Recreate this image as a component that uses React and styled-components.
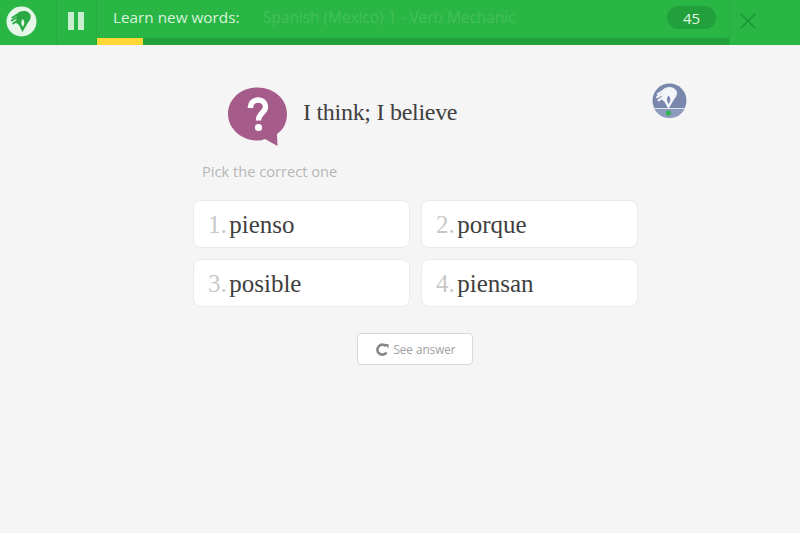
import React from 'react';
import styled, { createGlobalStyle } from 'styled-components';

const Global = createGlobalStyle`
  html, body { margin: 0; padding: 0; background: #f5f5f5; }
  * { box-sizing: border-box; }
`;

const Page = styled.div`
  width: 800px;
  height: 533px;
  overflow: hidden;
  background: #f5f5f5;
`;

const TopBar = styled.header`
  height: 45px;
  background: #29b645;
  display: flex;
  font-family: "Open Sans", sans-serif;
`;

const LogoCell = styled.div`
  width: 57px;
  border-right: 1px solid #26ab40;
  display: flex;
  align-items: center;
  padding: 0 0 3px 6px;
`;

const PauseCell = styled.div`
  width: 40px;
  border-right: 1px solid #26ab40;
  display: flex;
  align-items: center;
  justify-content: center;
  gap: 4px;
  padding: 0 1px 3px 0;
`;

const PauseBar = styled.span`
  width: 6px;
  height: 18px;
  background: #c9eecf;
`;

const Main = styled.div`
  width: 633px;
  display: flex;
  flex-direction: column;
  border-right: 1px solid #26ab40;
`;

const Info = styled.div`
  height: 38px;
  display: flex;
  align-items: center;
  padding: 0 13px 3px 16px;
`;

const Label = styled.span`
  font-size: 15.3px;
  color: #d8f3dc;
  width: 150px;
  margin-bottom: 1px;
`;

const Course = styled.span`
  font-size: 15.4px;
  color: #43c05c;
  flex: 1;
  margin-bottom: 1px;
`;

const Count = styled.span`
  width: 49px;
  height: 23px;
  border-radius: 12px;
  background: #22a03c;
  color: #e3f7e6;
  font-size: 15px;
  display: flex;
  align-items: center;
  justify-content: center;
`;

const Track = styled.div`
  height: 7px;
  background: #22a03c;
`;

const Fill = styled.div`
  height: 100%;
  background: #fdd835;
`;

const CloseCell = styled.div`
  flex: 1;
  display: flex;
  align-items: center;
  padding: 0 0 3px 9px;
`;

const Content = styled.main`
  width: 800px;
  display: flex;
  flex-direction: column;
`;

const Column = styled.div`
  width: 445px;
  margin-left: 193px;
  position: relative;
`;

const Prompt = styled.div`
  display: flex;
  align-items: center;
  gap: 15px;
  padding: 42px 0 0 35px;
`;

const PromptText = styled.h1`
  margin: 0 0 10px;
  font: 400 24px "Liberation Serif", serif;
  letter-spacing: -0.28px;
  color: #404040;
`;

const Hint = styled.div`
  margin: 14px 0 0 9px;
  font: 14.65px "Open Sans", sans-serif;
  color: #b5b5b5;
`;

const Grid = styled.div`
  margin-top: 19px;
  display: grid;
  grid-template-columns: 217px 217px;
  grid-auto-rows: 48px;
  gap: 11px;
`;

const Choice = styled.button`
  padding: 1px 0 0 14px;
  background: #fff;
  border: 1px solid #ebebeb;
  border-radius: 8px;
  display: flex;
  align-items: center;
  font: 25px "Liberation Serif", serif;
  color: #404040;
`;

const Num = styled.span`
  color: #c8c8c8;
  margin-right: 2.5px;
`;

const Footer = styled.div`
  display: flex;
  justify-content: center;
  margin: 26px 0 0 0;
  padding-right: 1px;
`;

const AnswerButton = styled.button`
  width: 116px;
  height: 32px;
  padding: 0 0 0 2px;
  background: #fff;
  border: 1px solid #d8d8d8;
  border-radius: 4px;
  display: flex;
  align-items: center;
  justify-content: center;
  gap: 4px;
  font: 11.7px "Open Sans", sans-serif;
  color: #a0a0a0;
`;

const Mascot = styled.div`
  position: absolute;
  left: 459px;
  top: 38px;
  width: 35px;
  height: 35px;
`;

// hand shape shared by the logo and the mascot, drawn in a 31x31 box
function Hand({ fill, hole }) {
  return (
    <g>
      <path d="M11 8 C13 5.5 16 4.5 19 5 C22.5 5.5 25 8 24.8 11 C24.6 14 22 16 20.5 19 L16.5 26 L13.5 20 C12.8 18.5 11.5 17.5 10 17 Z" fill={fill} />
      <path d="M6.5 11.5 L13 7.5 M5.8 14.5 L12.5 10.5 M7.2 17.5 L13 13.5" stroke={fill} strokeWidth="2" strokeLinecap="round" fill="none" />
      <path d="M16.8 13 C19 15 18.8 18 16.8 21 C14.8 18 14.6 15 16.8 13 Z" fill={hole} />
    </g>
  );
}

function Logo() {
  return (
    <svg width="31" height="31" viewBox="0 0 31 31">
      <circle cx="15.5" cy="15.5" r="15" fill="#e6f7e9" />
      <Hand fill="#29a843" hole="#e6f7e9" />
    </svg>
  );
}

function Bubble() {
  return (
    <svg width="60" height="60" viewBox="0 0 60 60">
      <path d="M29.5 0.5 C46 0.5 59 12 59 27 C59 36 55 43 49 47 L49.5 59 L37 52 C34.5 53 32 53.5 29.5 53.5 C13 53.5 0 41.5 0 27 C0 12 13 0.5 29.5 0.5 Z" fill="#a65c8b" />
      <path d="M22.5 21 C22.5 15.5 26 13 30 13 C35 13 37.5 16.5 37.5 20 C37.5 25.5 30.5 26 30.5 33.5" fill="none" stroke="#fff" strokeWidth="5.5" />
      <circle cx="30.5" cy="40.5" r="3.6" fill="#fff" />
    </svg>
  );
}

function MascotIcon() {
  return (
    <svg width="35" height="35" viewBox="0 0 35 35">
      <circle cx="17.5" cy="17.5" r="17" fill="#7a87ad" />
      <path d="M2.5 26 H32.5 A17 17 0 0 1 2.5 26 Z" fill="#8e9abd" />
      <path d="M2.5 25.5 H32.5" stroke="#dfe4ee" strokeWidth="1" />
      <g transform="translate(-1 -1) scale(1.05)">
        <Hand fill="#f2f4f8" hole="#7a87ad" />
      </g>
      <circle cx="16.5" cy="30" r="2.6" fill="#32b34c" />
    </svg>
  );
}

function Refresh() {
  return (
    <svg width="13" height="13" viewBox="0 0 13 13">
      <path d="M10.5 9.5 A5 5 0 1 1 10 3.2" fill="none" stroke="#888" strokeWidth="2.6" />
      <path d="M8 1 L12.5 1 L12.5 5.5 Z" fill="#888" />
    </svg>
  );
}

const choices = ['pienso', 'porque', 'posible', 'piensan'];

export default function App() {
  return (
    <Page>
      <Global />
      <TopBar>
        <LogoCell><Logo /></LogoCell>
        <PauseCell><PauseBar /><PauseBar /></PauseCell>
        <Main>
          <Info>
            <Label>Learn new words:</Label>
            <Course>Spanish (Mexico) 1 - Verb Mechanic</Course>
            <Count>45</Count>
          </Info>
          <Track><Fill style={{ width: `${(46 / 632) * 100}%` }} /></Track>
        </Main>
        <CloseCell>
          <svg width="18" height="18" viewBox="0 0 18 18">
            <path d="M2 2 L16 16 M16 2 L2 16" stroke="#1e9637" strokeWidth="1.6" />
          </svg>
        </CloseCell>
      </TopBar>
      <Content>
        <Column>
          <Prompt>
            <Bubble />
            <PromptText>I think; I believe</PromptText>
          </Prompt>
          <Mascot><MascotIcon /></Mascot>
          <Hint>Pick the correct one</Hint>
          <Grid>
            {choices.map((c, i) => (
              <Choice key={c}><Num>{i + 1}.</Num>{c}</Choice>
            ))}
          </Grid>
          <Footer>
            <AnswerButton><Refresh />See answer</AnswerButton>
          </Footer>
        </Column>
      </Content>
    </Page>
  );
}
